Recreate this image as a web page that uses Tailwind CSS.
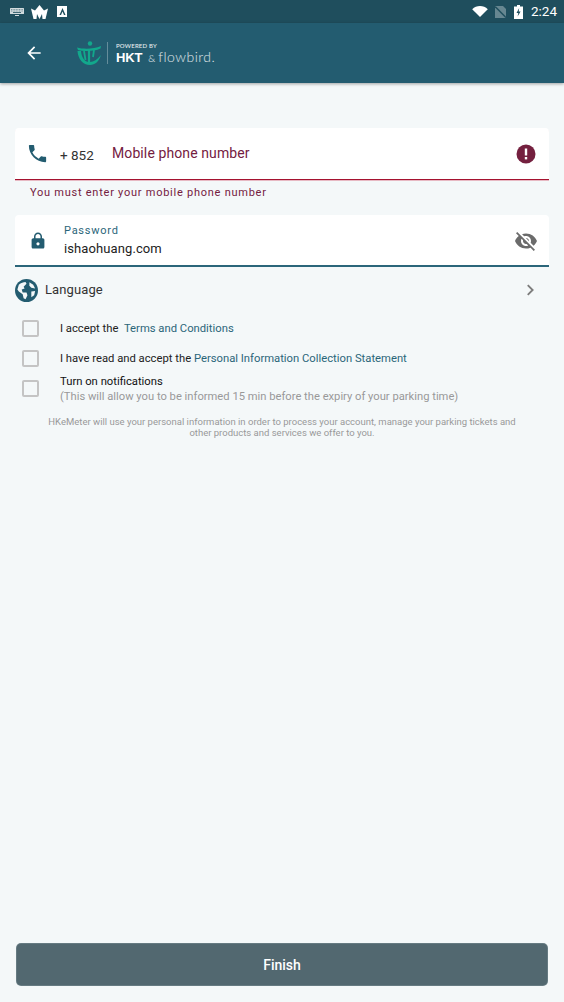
<!DOCTYPE html>
<html>
<head>
<meta charset="utf-8">
<script src="https://cdn.jsdelivr.net/npm/@tailwindcss/browser@4"></script>
</head>
<body class="m-0">
<div class="w-[564px] h-[1002px] overflow-hidden flex flex-col bg-[#f4f8f9] font-['Roboto',sans-serif]">
  <!-- status bar -->
  <div class="h-[23px] bg-[#1f4e5d] flex items-center justify-between pl-[10px] pr-[7px] shrink-0">
    <div class="flex items-center">
      <svg width="14" height="8" viewBox="0 0 14 8" class="opacity-80"><rect x="0" y="0" width="14" height="6" rx="0.5" fill="#fff"/><path d="M1 1.500h12M1 3h12" stroke="#1f4e5d" stroke-width=".5" stroke-dasharray="1 .6"/><rect x="3" y="4.200" width="8" height=".8" fill="#1f4e5d"/><rect x="5" y="7" width="4" height="1" fill="#fff"/></svg>
      <svg width="17" height="14" viewBox="0 0 17 14" class="ml-[7px]"><path d="M0 3.500L4 5.500L8.500 0L13 5.500L17 3.500L14.500 14H2.500Z" fill="#fff"/><path d="M5.500 14L6 9L8.500 14L11 9L11.500 14Z" fill="#1f4e5d"/></svg>
      <div class="ml-[9px] w-[10px] h-[11px] bg-white flex items-center justify-center"><svg width="7" height="7" viewBox="0 0 7 7"><path d="M3.500 0L6.500 7H5L3.500 3.500L2 7H.5Z" fill="#1f4e5d"/></svg></div>
    </div>
    <div class="flex items-center">
      <svg width="16" height="11" viewBox="0 0 17 12"><path d="M0 3.500C4.500 -1 12.500 -1 17 3.500L8.500 12Z" fill="#fff"/></svg>
      <svg width="11" height="12" viewBox="0 0 11 12" class="ml-[7px]"><path d="M0 0H8L11 3V12H0Z" fill="#fff" opacity=".32"/><path d="M0 0.500L11 11.500" stroke="#1f4e5d" stroke-width="1.500"/></svg>
      <svg width="9" height="14" viewBox="0 0 9 14" class="ml-[8px]"><path d="M3 0H6V1.500H9V14H0V1.500H3Z" fill="#fff"/><path d="M5.200 3L2.500 8H4.300L3.600 11.500L6.600 6.500H4.700Z" fill="#1f4e5d"/></svg>
      <span class="ml-[8px] text-[13.500px] leading-none text-white">2:24</span>
    </div>
  </div>
  <!-- header -->
  <div class="h-[60px] bg-[#235c70] shadow-[0_1px_3px_rgba(0,0,0,.35)] shrink-0 flex items-center pl-[24px] relative">
    <svg width="20" height="20" viewBox="0 0 24 24" class="shrink-0"><path d="M20 11H7.830l5.590-5.590L12 4l-8 8 8 8 1.410-1.410L7.830 13H20v-2z" fill="#fff"/></svg>
    <svg width="26" height="24" viewBox="0 0 26 24" class="ml-[32px] shrink-0">
      <circle cx="14" cy="2.500" r="2.200" fill="#12a88c"/>
      <path d="M1 6.500C8 8.500 18 8 25 5L24.500 7.500C18 10.500 8 10.500 2 9Z" fill="#12a88c"/>
      <path d="M13 8V22" stroke="#12a88c" stroke-width="2.200"/>
      <path d="M1.500 10C2 18 7 24 14 24C19 24 23 20.500 25 14C21 19 17 21.500 13 21C8 20.500 5.500 16 5 10Z" fill="#12a88c"/>
      <path d="M8 10L9.500 19M18 9L17 16" stroke="#12a88c" stroke-width="1.800"/>
    </svg>
    <div class="ml-[5px] w-px h-[22px] bg-white/30 shrink-0"></div>
    <div class="ml-[8px] flex flex-col text-white font-['Lato',sans-serif]">
      <span class="text-[6px] leading-[7px] tracking-[0.2px] font-medium text-white/90">POWERED BY</span>
      <div class="flex items-baseline leading-[13px] mt-[1px]">
        <span class="text-[13px] font-bold font-['Liberation_Sans',sans-serif] tracking-[-0.2px]">HKT</span>
        <span class="text-[10px] font-light ml-[6px] text-white/90">&amp;</span>
        <span class="text-[14px] font-light ml-[3px] text-white/85 tracking-[0.5px]">flowbird.</span>
      </div>
    </div>
  </div>
  <!-- content -->
  <div class="flex-1 flex flex-col px-[15px] pt-[45px] min-h-0">
    <!-- phone -->
    <div class="h-[52px] bg-white rounded-t-[4px] border-b border-b-[#a5122f] flex items-center pl-[11px] pr-[12px] shadow-[0_1px_0_#e7b9c3]">
      <svg width="23" height="23" viewBox="0 0 24 24" class="shrink-0"><path d="M6.620 10.790c1.440 2.830 3.760 5.140 6.590 6.590l2.200-2.200c.27-.27.670-.36 1.020-.24 1.120.37 2.330.57 3.570.57.550 0 1 .45 1 1V20c0 .55-.45 1-1 1-9.390 0-17-7.610-17-17 0-.55.450-1 1-1h3.500c.55 0 1 .45 1 1 0 1.250.2 2.450.57 3.570.11.350.03.740-.25 1.020l-2.200 2.200z" fill="#235c70"/></svg>
      <span class="ml-[11px] text-[13.500px] text-[#333] mt-[3px] w-[52px] shrink-0">+ 852</span>
      <span class="text-[14px] text-[#74203f] tracking-[0.1px] flex-1">Mobile phone number</span>
      <svg width="24" height="24" viewBox="0 0 24 24" class="shrink-0 mr-[-1px]"><circle cx="12" cy="12" r="9.500" fill="#74203f"/><rect x="10.800" y="6.500" width="2.400" height="7" fill="#fff"/><rect x="10.800" y="15" width="2.400" height="2.400" fill="#fff"/></svg>
    </div>
    <div class="h-[35px] pl-[15px] pt-[6px] text-[11px] leading-[14px] text-[#74203f] tracking-[0.75px]">You must enter your mobile phone number</div>
    <!-- password -->
    <div class="h-[52px] bg-white rounded-t-[4px] border-b-2 border-b-[#2b667a] flex items-center pl-[11px] pr-[11px]">
      <svg width="24" height="24" viewBox="0 0 24 24" class="shrink-0 mt-[2px]"><path d="M18 8.500h-1v-2c0-2.760-2.240-5-5-5s-5 2.240-5 5v2H6c-1.100 0-2 .9-2 2v9c0 1.100.9 2 2 2h12c1.100 0 2-.9 2-2v-9c0-1.100-.9-2-2-2zm-6 9c-1.100 0-2-.9-2-2s.9-2 2-2 2 .9 2 2-.9 2-2 2zm3.100-9H8.900v-2c0-1.710 1.390-3.100 3.100-3.100s3.100 1.390 3.100 3.100v2z" fill="#235c70" transform="translate(2.400 2.400) scale(.8)"/></svg>
      <div class="ml-[14px] flex-1 flex flex-col pt-[4px]">
        <span class="text-[11px] leading-[14px] text-[#2b667a] tracking-[0.75px]">Password</span>
        <span class="text-[13px] leading-[22px] text-[#222] tracking-[0.1px]">ishaohuang.com</span>
      </div>
      <svg width="24" height="24" viewBox="0 0 24 24" class="shrink-0 mt-[1px]"><path d="M12 7c2.760 0 5 2.240 5 5 0 .65-.13 1.260-.36 1.830l2.920 2.920c1.510-1.260 2.700-2.890 3.430-4.750-1.730-4.390-6-7.500-11-7.500-1.400 0-2.740.25-3.980.7l2.160 2.160C10.740 7.130 11.350 7 12 7zM2 4.270l2.280 2.280.46.46C3.080 8.300 1.780 10.020 1 12c1.730 4.390 6 7.500 11 7.500 1.550 0 3.030-.3 4.380-.84l.42.42L19.730 22 21 20.730 3.270 3 2 4.270zM7.530 9.800l1.550 1.550c-.05.21-.08.43-.08.65 0 1.660 1.340 3 3 3 .22 0 .44-.03.650-.08l1.550 1.550c-.67.33-1.410.53-2.200.53-2.760 0-5-2.240-5-5 0-.79.2-1.530.53-2.200zm4.310-.78l3.150 3.150.02-.16c0-1.660-1.340-3-3-3l-.17.010z" fill="#6b6b6b"/></svg>
    </div>
    <!-- language -->
    <div class="h-[48px] -mt-[1px] flex items-center">
      <svg width="23" height="23" viewBox="0 0 24 24" class="shrink-0"><circle cx="12" cy="12" r="12" fill="#235c70"/><path d="M4 6C6 4 9 3 11 3L12 5L9 8L10 10L7 11L8 14L12 14L13 17L11 21L9 20L8 16L4 13L2.500 11Z" fill="#f4f8f9"/><path d="M15 3.500L19 6L21 10L17 9L15 7Z" fill="#f4f8f9"/><path d="M17 13L21 12.500L20 17L17 19Z" fill="#f4f8f9"/></svg>
      <span class="ml-[7px] flex-1 text-[13px] text-[#333] tracking-[0.1px]">Language</span>
      <svg width="18" height="18" viewBox="0 0 24 24" class="shrink-0 mr-[10px]"><path d="M9 5.500L15.500 12L9 18.500" fill="none" stroke="#7d7d7d" stroke-width="2.500"/></svg>
    </div>
    <!-- checks -->
    <div class="flex flex-col pl-[7px] mt-[6px]">
      <div class="h-[17px] flex items-center">
        <div class="w-[17px] h-[17px] rounded-[2px] border-2 border-[#c4c4c4] shrink-0"></div>
        <span class="ml-[21px] text-[11.250px] leading-none text-[#222]">I accept the&nbsp;&nbsp;<span class="text-[#2b667a]">Terms and Conditions</span></span>
      </div>
      <div class="h-[17px] mt-[13px] flex items-center">
        <div class="w-[17px] h-[17px] rounded-[2px] border-2 border-[#c4c4c4] shrink-0"></div>
        <span class="ml-[21px] text-[11.250px] leading-none text-[#222]">I have read and accept the <span class="text-[#2b667a]">Personal Information Collection Statement</span></span>
      </div>
      <div class="mt-[13px] flex items-start">
        <div class="w-[17px] h-[17px] rounded-[2px] border-2 border-[#c4c4c4] shrink-0"></div>
        <div class="ml-[21px] flex flex-col -mt-[6px]">
          <span class="text-[11.250px] leading-[15px] text-[#111]">Turn on notifications</span>
          <span class="text-[11.200px] leading-[16px] text-[#999]">(This will allow you to be informed 15 min before the expiry of your parking time)</span>
        </div>
      </div>
    </div>
    <p class="mt-[11px] mx-[28px] text-center text-[9.500px] leading-[11px] text-[#999]">HKeMeter will use your personal information in order to process your account, manage your parking tickets and other products and services we offer to you.</p>
    <div class="flex-1"></div>
    <!-- finish -->
    <div class="mb-[16px] mx-[1px] h-[43px] pt-[1px] rounded-[5px] bg-[#526870] border border-[#7a8d94]/50 flex items-center justify-center text-[14px] font-medium text-white">Finish</div>
  </div>
</div>
</body>
</html>
